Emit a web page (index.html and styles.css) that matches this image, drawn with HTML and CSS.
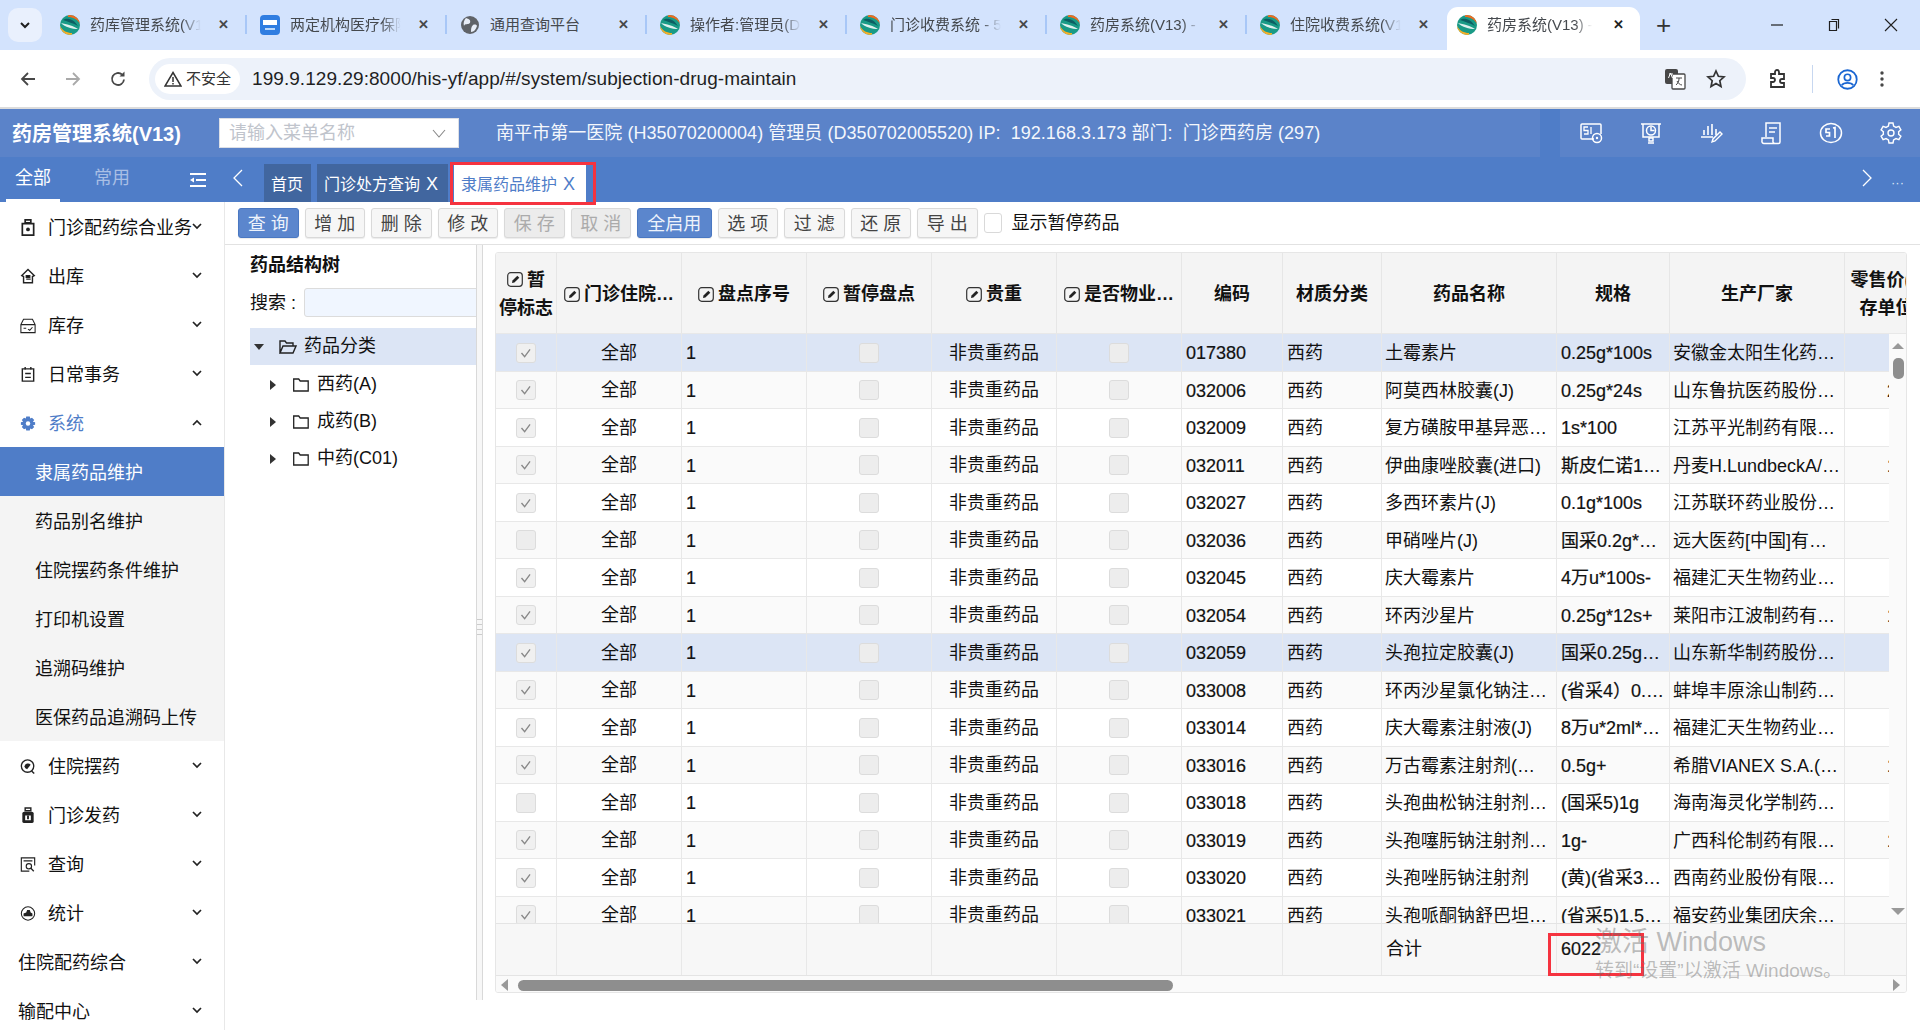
FILE: index.html
```html
<!DOCTYPE html>
<html lang="zh-CN">
<head>
<meta charset="utf-8">
<title>药房系统(V13)</title>
<link rel="stylesheet" href="styles.css">
</head>
<body>
<svg class="defs" aria-hidden="true">
  <defs>
    <clipPath id="fav-clip"><circle cx="10" cy="10" r="10"/></clipPath>
    <symbol id="fav" viewBox="0 0 20 20">
      <g clip-path="url(#fav-clip)">
        <rect width="20" height="20" fill="#1a9a86"/>
        <path d="M8 0h12v9C17 4 13 2 8 2z" fill="#ee6a1f"/>
        <path d="M0 11c3 5 7 7 12 7v2H0z" fill="#f4ae28"/>
        <path d="M3 5c4-3 11-1 15 6-5-3-10-4-15-6z" fill="#0d5f63"/>
        <path d="M1 8c5 1 13 3 17 6-6 0-13-2-17-6z" fill="#fff" opacity=".85"/>
      </g>
    </symbol>
    <symbol id="edit" viewBox="0 0 16 15">
      <rect x=".7" y=".7" width="14.6" height="13.6" rx="3" fill="none" stroke="#333" stroke-width="1.200"/>
      <path d="M5 11l.5-2.400 4.800-4.800 2 1.900-4.900 4.800z" fill="#222"/>
    </symbol>
    <symbol id="chev" viewBox="0 0 10 7">
      <path d="M1 1l4 4 4-4" fill="none" stroke="#222" stroke-width="1.700"/>
    </symbol>
    <symbol id="folder" viewBox="0 0 16 14">
      <path d="M.7 1h5l1.500 2h8v10H.7z" fill="none" stroke="#222" stroke-width="1.300"/>
    </symbol>
  </defs>
</svg>

<header class="browser-tabs">
  <button class="tab-search"><svg class="tab-search-icon" viewBox="0 0 10 7"><path d="M1 1l4 4 4-4" fill="none" stroke="#1f1f1f" stroke-width="2"/></svg></button>
  <div class="b-tab"><svg class="favicon"><use href="#fav"/></svg><span class="b-title">药库管理系统(V1</span><span class="b-close">✕</span></div>
  <div class="b-tab"><svg class="favicon" viewBox="0 0 20 20"><rect width="20" height="20" rx="4" fill="#2f7de1"/><rect x="3" y="5" width="14" height="5" fill="#fff"/><rect x="5" y="13" width="10" height="2" fill="#bcd8fa"/></svg><span class="b-title">两定机构医疗保障</span><span class="b-close">✕</span></div>
  <div class="b-tab"><svg class="favicon" viewBox="0 0 20 20"><circle cx="10" cy="10" r="9" fill="#5f6368"/><path d="M6 3c3 1 5 2 4 5-2 2-5 0-6 3-1-3 0-6 2-8zm7 7c2-1 4 0 4 1-1 3-3 6-6 6 0-3 0-5 2-7z" fill="#e8eef8"/></svg><span class="b-title b-title-full">通用查询平台</span><span class="b-close">✕</span></div>
  <div class="b-tab"><svg class="favicon"><use href="#fav"/></svg><span class="b-title">操作者:管理员(D</span><span class="b-close">✕</span></div>
  <div class="b-tab"><svg class="favicon"><use href="#fav"/></svg><span class="b-title">门诊收费系统 - 5</span><span class="b-close">✕</span></div>
  <div class="b-tab"><svg class="favicon"><use href="#fav"/></svg><span class="b-title">药房系统(V13) -</span><span class="b-close">✕</span></div>
  <div class="b-tab"><svg class="favicon"><use href="#fav"/></svg><span class="b-title">住院收费系统(V1</span><span class="b-close">✕</span></div>
  <div class="b-tab b-tab-active"><svg class="favicon"><use href="#fav"/></svg><span class="b-title">药房系统(V13) -</span><span class="b-close">✕</span></div>
  <span class="b-new">+</span>
  <div class="win-controls">
    <svg class="win-btn" viewBox="0 0 14 14"><path d="M1 7h12" stroke="#1f1f1f" stroke-width="1.200"/></svg>
    <svg class="win-btn" viewBox="0 0 14 14"><path d="M4.500 1.500h7v9M2.500 3.500h7v9h-7z" fill="none" stroke="#1f1f1f" stroke-width="1.200"/></svg>
    <svg class="win-btn" viewBox="0 0 14 14"><path d="M1 1l12 12M13 1L1 13" stroke="#1f1f1f" stroke-width="1.100"/></svg>
  </div>
</header>

<div class="browser-bar">
  <svg class="bar-icon" viewBox="0 0 18 18"><path d="M16 9H3M9 3L3 9l6 6" fill="none" stroke="#474747" stroke-width="1.800"/></svg>
  <svg class="bar-icon bar-icon-off" viewBox="0 0 18 18"><path d="M2 9h13M9 3l6 6-6 6" fill="none" stroke="#a9a9a9" stroke-width="1.800"/></svg>
  <svg class="bar-icon" viewBox="0 0 18 18"><path d="M15 9.500A6 6 0 1 1 13 4.500" fill="none" stroke="#474747" stroke-width="1.800"/><path d="M15.500 1.500v5h-5z" fill="#474747"/></svg>
  <div class="omnibox">
    <span class="chip"><svg class="warn" viewBox="0 0 18 16"><path d="M9 1.500L17 15H1z" fill="none" stroke="#333" stroke-width="1.500"/><path d="M9 6v5M9 12v1.500" stroke="#333" stroke-width="1.500"/></svg>不安全</span>
    <span class="url">199.9.129.29:8000/his-yf/app/#/system/subjection-drug-maintain</span>
    <svg class="omni-icon" viewBox="0 0 22 22"><rect x="1" y="1" width="13" height="15" rx="2" fill="#474747"/><rect x="8" y="6" width="13" height="15" rx="1" fill="#fff" stroke="#474747" stroke-width="1.300"/><path d="M12 10h6M15 10v1c0 3-2 5-3 6M13 13c1 2 3 4 5 4" fill="none" stroke="#474747"/><path d="M5 6h4M4.500 10l2-5 2 5" fill="none" stroke="#fff"/></svg>
    <svg class="omni-icon omni-star" viewBox="0 0 20 20"><path d="M10 2l2.400 5.300 5.600.6-4.200 3.800 1.200 5.800L10 14.600l-5 2.900 1.200-5.800L2 7.900l5.600-.6z" fill="none" stroke="#333" stroke-width="1.700"/></svg>
  </div>
  <svg class="ext-icon" viewBox="0 0 20 20"><path d="M3 5h4V3a2 2 0 0 1 4 0v2h5v5h-2a2 2 0 0 0 0 4h2v4H3v-5h2a2 2 0 0 0 0-4H3z" fill="none" stroke="#333" stroke-width="1.800"/></svg>
  <span class="bar-sep"></span>
  <svg class="profile" viewBox="0 0 20 20"><circle cx="10" cy="10" r="8.800" fill="none" stroke="#1a66d2" stroke-width="1.700"/><circle cx="10" cy="8" r="3" fill="none" stroke="#1a66d2" stroke-width="1.600"/><path d="M4.500 15.500c2-3 9-3 11 0" fill="none" stroke="#1a66d2" stroke-width="1.600"/></svg>
  <svg class="dots" viewBox="0 0 4 18"><circle cx="2" cy="3" r="1.700" fill="#474747"/><circle cx="2" cy="9" r="1.700" fill="#474747"/><circle cx="2" cy="15" r="1.700" fill="#474747"/></svg>
</div>

<div class="app-header">
  <div class="app-header-main">
    <h1 class="app-title">药房管理系统(V13)</h1>
    <div class="menu-search"><span>请输入菜单名称</span><svg class="menu-search-chev" viewBox="0 0 14 9"><path d="M1 1l6 7 6-7" fill="none" stroke="#888" stroke-width="1.100"/></svg></div>
    <div class="app-info">南平市第一医院 (H35070200004) 管理员 (D350702005520) IP:&nbsp; 192.168.3.173 部门:&nbsp; 门诊西药房 (297)</div>
  </div>
  <div class="app-header-tools">
    <svg class="tool" viewBox="0 0 24 24"><path d="M15 18H3a1 1 0 0 1-1-1V4a1 1 0 0 1 1-1h18a1 1 0 0 1 1 1v9" fill="none" stroke="#fff" stroke-width="1.500"/><path d="M9 6H5v3.500h4V13H5M12 6v7" fill="none" stroke="#fff" stroke-width="1.300"/><circle cx="18" cy="17" r="4.500" fill="none" stroke="#fff" stroke-width="1.500"/><circle cx="18" cy="17" r="1.200" fill="#fff"/></svg>
    <svg class="tool" viewBox="0 0 24 24"><path d="M2 3h20M4 3v13h16V3" fill="none" stroke="#fff" stroke-width="1.500"/><circle cx="12" cy="9.500" r="4.500" fill="none" stroke="#fff" stroke-width="1.500"/><path d="M12 6v3.500h3.500M10 17h4v3h-4zM9 22h6" fill="none" stroke="#fff" stroke-width="1.500"/></svg>
    <svg class="tool" viewBox="0 0 24 24"><path d="M5 14V9M9 14V5M13 14V3M17 14V8M2 16h12" fill="none" stroke="#fff" stroke-width="1.600"/><path d="M13 21l1-3 7-7 2 2-7 7z" fill="none" stroke="#fff" stroke-width="1.400"/></svg>
    <svg class="tool" viewBox="0 0 24 24"><path d="M7 16V2h14v19a1.500 1.500 0 0 1-1.500 1.500H5M3 17h11v3a2 2 0 0 0 2 2.500H5a2 2 0 0 1-2-2.500z" fill="none" stroke="#fff" stroke-width="1.500"/><path d="M10 7h8M10 11h6" stroke="#fff" stroke-width="1.600"/></svg>
    <svg class="tool" viewBox="0 0 24 24"><ellipse cx="12" cy="12" rx="10.500" ry="9.500" fill="none" stroke="#fff" stroke-width="1.500"/><path d="M11 8H7v3.500h3.500V15H7M14 7l2-.5V17" fill="none" stroke="#fff" stroke-width="1.700"/></svg>
    <svg class="tool" viewBox="0 0 24 24"><path d="M10 2h4l.6 3 2.400 1.400 2.900-1 2 3.400-2.300 2a6 6 0 0 1 0 2.400l2.300 2-2 3.400-2.900-1L14.600 19l-.6 3h-4l-.6-3L7 17.600l-2.900 1-2-3.400 2.300-2a6 6 0 0 1 0-2.400l-2.300-2 2-3.400 2.900 1L9.400 5z" fill="none" stroke="#fff" stroke-width="1.400"/><circle cx="12" cy="12" r="3" fill="none" stroke="#fff" stroke-width="1.400"/></svg>
  </div>
</div>

<nav class="app-nav">
  <div class="nav-switch">
    <span class="switch-item switch-on">全部</span>
    <span class="switch-item switch-off">常用</span>
    <svg class="fold" viewBox="0 0 16 16"><path d="M0 2h16M6 8h10M0 14h16" stroke="#fff" stroke-width="2.200"/><path d="M4 5.500L0 8l4 2.500z" fill="#fff"/></svg>
  </div>
  <svg class="nav-arrow" viewBox="0 0 10 18"><path d="M9 1L1 9l8 8" fill="none" stroke="#fff" stroke-width="1.300"/></svg>
  <div class="page-tabs">
    <span class="page-tab page-tab-home">首页</span>
    <span class="page-tab">门诊处方查询<span class="tab-x">X</span></span>
    <span class="page-tab page-tab-active">隶属药品维护<span class="tab-x">X</span><i class="red-box"></i></span>
  </div>
  <svg class="nav-arrow nav-arrow-right" viewBox="0 0 10 18"><path d="M1 1l8 8-8 8" fill="none" stroke="#fff" stroke-width="1.300"/></svg>
  <span class="nav-more">···</span>
</nav>

<div class="main">
  <aside class="sidebar">
    <div class="side-item"><svg class="side-icon" viewBox="0 0 16 18"><path d="M5 1h6v3H5zM2 5h12v12H2z" fill="none" stroke="#222" stroke-width="1.800"/><circle cx="8" cy="11" r="2" fill="#222"/></svg><span class="side-text">门诊配药综合业务</span><svg class="chev"><use href="#chev"/></svg></div>
    <div class="side-item"><svg class="side-icon" viewBox="0 0 18 18"><path d="M9 1l7 7-2 1v7H4V9L2 8z" fill="none" stroke="#222" stroke-width="1.600"/><path d="M7 8h4v2H7zM7 12h5" stroke="#222" stroke-width="1.400"/></svg><span class="side-text">出库</span><svg class="chev"><use href="#chev"/></svg></div>
    <div class="side-item"><svg class="side-icon" viewBox="0 0 18 18"><path d="M1 8l3-6h10l3 6v9H1zM1 8h16M4 12h3M9 13l2 1.500 3-3.500" fill="none" stroke="#222" stroke-width="1.200"/></svg><span class="side-text">库存</span><svg class="chev"><use href="#chev"/></svg></div>
    <div class="side-item"><svg class="side-icon" viewBox="0 0 16 18"><path d="M2 3h12v13H2zM5 1v3M11 1v3M5 8h6M5 12h6" fill="none" stroke="#222" stroke-width="1.500"/></svg><span class="side-text">日常事务</span><svg class="chev"><use href="#chev"/></svg></div>
    <div class="side-item side-item-open"><svg class="side-icon" viewBox="0 0 18 18"><path d="M7 1h4l.5 2.500 2-1 2.500 2.500-1.500 2L17 7.500v3l-2.500.5 1.500 2-2.500 2.500-2-1L11 17H7l-.5-2.500-2 1L2 13l1.500-2L1 10.500v-3l2.500-.5L2 5l2.500-2.500 2 1z" fill="#4f7dc8"/><circle cx="9" cy="9" r="2.500" fill="#fff"/></svg><span class="side-text">系统</span><svg class="chev chev-up"><use href="#chev"/></svg></div>
    <div class="side-sub">
      <div class="sub-item sub-item-active">隶属药品维护</div>
      <div class="sub-item">药品别名维护</div>
      <div class="sub-item">住院摆药条件维护</div>
      <div class="sub-item">打印机设置</div>
      <div class="sub-item">追溯码维护</div>
      <div class="sub-item">医保药品追溯码上传</div>
    </div>
    <div class="side-item"><svg class="side-icon" viewBox="0 0 18 18"><circle cx="8.500" cy="8.500" r="7" fill="none" stroke="#222" stroke-width="1.500"/><path d="M5 9a4 4 0 0 1 7-2l-4 5a4 4 0 0 1-3-3z" fill="#222"/><path d="M13 14l3 3" stroke="#222" stroke-width="1.600"/></svg><span class="side-text">住院摆药</span><svg class="chev"><use href="#chev"/></svg></div>
    <div class="side-item"><svg class="side-icon" viewBox="0 0 16 18"><path d="M5 1h6v3H5z" fill="none" stroke="#222" stroke-width="1.500"/><rect x="2" y="5" width="12" height="12" rx="2" fill="#222"/><path d="M5 9h6v5H5z" fill="#fff"/><path d="M8 9v4" stroke="#222" stroke-width="2"/></svg><span class="side-text">门诊发药</span><svg class="chev"><use href="#chev"/></svg></div>
    <div class="side-item"><svg class="side-icon" viewBox="0 0 18 18"><path d="M16.500 10V1.500h-15v15h9M4 5h10" fill="none" stroke="#222" stroke-width="1.300"/><circle cx="10" cy="11" r="3" fill="none" stroke="#222" stroke-width="1.300"/><path d="M12 13l3.500 3.500" stroke="#222" stroke-width="1.500"/></svg><span class="side-text">查询</span><svg class="chev"><use href="#chev"/></svg></div>
    <div class="side-item"><svg class="side-icon" viewBox="0 0 18 18"><circle cx="9" cy="9" r="7.500" fill="none" stroke="#222" stroke-width="1.200"/><path d="M4 12h10V9l-2-1-1-3H8L7 8 4 9z" fill="#222"/></svg><span class="side-text">统计</span><svg class="chev"><use href="#chev"/></svg></div>
    <div class="side-item"><span class="side-text">住院配药综合</span><svg class="chev"><use href="#chev"/></svg></div>
    <div class="side-item"><span class="side-text">输配中心</span><svg class="chev"><use href="#chev"/></svg></div>
  </aside>

  <section class="content">
    <div class="toolbar">
      <button class="btn btn-primary">查询</button>
      <button class="btn">增加</button>
      <button class="btn">删除</button>
      <button class="btn">修改</button>
      <button class="btn btn-off">保存</button>
      <button class="btn btn-off">取消</button>
      <button class="btn btn-primary btn-wide">全启用</button>
      <button class="btn">选项</button>
      <button class="btn">过滤</button>
      <button class="btn">还原</button>
      <button class="btn">导出</button>
      <span class="tool-check"></span>
      <span class="tool-label">显示暂停药品</span>
    </div>
    <div class="panes">
      <div class="tree-pane">
        <div class="tree-title">药品结构树</div>
        <div class="tree-search"><span class="tree-label">搜索 :</span><span class="tree-input"></span></div>
        <div class="tree-row tree-root"><i class="caret-down"></i><svg class="folder-open" viewBox="0 0 18 14"><path d="M1 13V1h5l1.500 2H14v3M1 13l3-7h13l-3 7z" fill="none" stroke="#222" stroke-width="1.400"/></svg><span>药品分类</span></div>
        <div class="tree-row tree-child"><i class="caret-right"></i><svg class="folder"><use href="#folder"/></svg><span>西药(A)</span></div>
        <div class="tree-row tree-child"><i class="caret-right"></i><svg class="folder"><use href="#folder"/></svg><span>成药(B)</span></div>
        <div class="tree-row tree-child"><i class="caret-right"></i><svg class="folder"><use href="#folder"/></svg><span>中药(C01)</span></div>
      </div>
      <div class="splitter"><i class="grip"></i></div>
      <div class="table-pane">
        <div class="grid-row grid-head">
          <div class="th th-wrap"><svg class="edit"><use href="#edit"/></svg>暂<br>停标志</div>
          <div class="th"><svg class="edit"><use href="#edit"/></svg>门诊住院…</div>
          <div class="th"><svg class="edit"><use href="#edit"/></svg>盘点序号</div>
          <div class="th"><svg class="edit"><use href="#edit"/></svg>暂停盘点</div>
          <div class="th"><svg class="edit"><use href="#edit"/></svg>贵重</div>
          <div class="th"><svg class="edit"><use href="#edit"/></svg>是否物业…</div>
          <div class="th">编码</div>
          <div class="th">材质分类</div>
          <div class="th">药品名称</div>
          <div class="th">规格</div>
          <div class="th">生产厂家</div>
          <div class="th th-wrap th-price">零售价(库<br>存单位)</div>
        </div>
        <div class="grid-scroll">
          <div class="grid-clip">
            <div class="grid-row row-on"><div class="td tc"><i class="cb cb-on"></i></div><div class="td tc">全部</div><div class="td">1</div><div class="td tc"><i class="cb"></i></div><div class="td tc">非贵重药品</div><div class="td tc"><i class="cb"></i></div><div class="td">017380</div><div class="td">西药</div><div class="td">土霉素片</div><div class="td">0.25g*100s</div><div class="td">安徽金太阳生化药…</div><div class="td td-price"></div></div>
            <div class="grid-row row-alt"><div class="td tc"><i class="cb cb-on"></i></div><div class="td tc">全部</div><div class="td">1</div><div class="td tc"><i class="cb"></i></div><div class="td tc">非贵重药品</div><div class="td tc"><i class="cb"></i></div><div class="td">032006</div><div class="td">西药</div><div class="td">阿莫西林胶囊(J)</div><div class="td">0.25g*24s</div><div class="td">山东鲁抗医药股份…</div><div class="td td-price">2</div></div>
            <div class="grid-row"><div class="td tc"><i class="cb cb-on"></i></div><div class="td tc">全部</div><div class="td">1</div><div class="td tc"><i class="cb"></i></div><div class="td tc">非贵重药品</div><div class="td tc"><i class="cb"></i></div><div class="td">032009</div><div class="td">西药</div><div class="td">复方磺胺甲基异恶…</div><div class="td">1s*100</div><div class="td">江苏平光制药有限…</div><div class="td td-price"></div></div>
            <div class="grid-row row-alt"><div class="td tc"><i class="cb cb-on"></i></div><div class="td tc">全部</div><div class="td">1</div><div class="td tc"><i class="cb"></i></div><div class="td tc">非贵重药品</div><div class="td tc"><i class="cb"></i></div><div class="td">032011</div><div class="td">西药</div><div class="td">伊曲康唑胶囊(进口)</div><div class="td">斯皮仁诺1…</div><div class="td">丹麦H.LundbeckA/…</div><div class="td td-price">1</div></div>
            <div class="grid-row"><div class="td tc"><i class="cb cb-on"></i></div><div class="td tc">全部</div><div class="td">1</div><div class="td tc"><i class="cb"></i></div><div class="td tc">非贵重药品</div><div class="td tc"><i class="cb"></i></div><div class="td">032027</div><div class="td">西药</div><div class="td">多西环素片(J)</div><div class="td">0.1g*100s</div><div class="td">江苏联环药业股份…</div><div class="td td-price"></div></div>
            <div class="grid-row row-alt"><div class="td tc"><i class="cb"></i></div><div class="td tc">全部</div><div class="td">1</div><div class="td tc"><i class="cb"></i></div><div class="td tc">非贵重药品</div><div class="td tc"><i class="cb"></i></div><div class="td">032036</div><div class="td">西药</div><div class="td">甲硝唑片(J)</div><div class="td">国采0.2g*…</div><div class="td">远大医药[中国]有…</div><div class="td td-price"></div></div>
            <div class="grid-row"><div class="td tc"><i class="cb cb-on"></i></div><div class="td tc">全部</div><div class="td">1</div><div class="td tc"><i class="cb"></i></div><div class="td tc">非贵重药品</div><div class="td tc"><i class="cb"></i></div><div class="td">032045</div><div class="td">西药</div><div class="td">庆大霉素片</div><div class="td">4万u*100s-</div><div class="td">福建汇天生物药业…</div><div class="td td-price"></div></div>
            <div class="grid-row row-alt"><div class="td tc"><i class="cb cb-on"></i></div><div class="td tc">全部</div><div class="td">1</div><div class="td tc"><i class="cb"></i></div><div class="td tc">非贵重药品</div><div class="td tc"><i class="cb"></i></div><div class="td">032054</div><div class="td">西药</div><div class="td">环丙沙星片</div><div class="td">0.25g*12s+</div><div class="td">莱阳市江波制药有…</div><div class="td td-price">1</div></div>
            <div class="grid-row row-on"><div class="td tc"><i class="cb cb-on"></i></div><div class="td tc">全部</div><div class="td">1</div><div class="td tc"><i class="cb"></i></div><div class="td tc">非贵重药品</div><div class="td tc"><i class="cb"></i></div><div class="td">032059</div><div class="td">西药</div><div class="td">头孢拉定胶囊(J)</div><div class="td">国采0.25g…</div><div class="td">山东新华制药股份…</div><div class="td td-price"></div></div>
            <div class="grid-row row-alt"><div class="td tc"><i class="cb cb-on"></i></div><div class="td tc">全部</div><div class="td">1</div><div class="td tc"><i class="cb"></i></div><div class="td tc">非贵重药品</div><div class="td tc"><i class="cb"></i></div><div class="td">033008</div><div class="td">西药</div><div class="td">环丙沙星氯化钠注…</div><div class="td">(省采4）0.…</div><div class="td">蚌埠丰原涂山制药…</div><div class="td td-price"></div></div>
            <div class="grid-row"><div class="td tc"><i class="cb cb-on"></i></div><div class="td tc">全部</div><div class="td">1</div><div class="td tc"><i class="cb"></i></div><div class="td tc">非贵重药品</div><div class="td tc"><i class="cb"></i></div><div class="td">033014</div><div class="td">西药</div><div class="td">庆大霉素注射液(J)</div><div class="td">8万u*2ml*…</div><div class="td">福建汇天生物药业…</div><div class="td td-price"></div></div>
            <div class="grid-row row-alt"><div class="td tc"><i class="cb cb-on"></i></div><div class="td tc">全部</div><div class="td">1</div><div class="td tc"><i class="cb"></i></div><div class="td tc">非贵重药品</div><div class="td tc"><i class="cb"></i></div><div class="td">033016</div><div class="td">西药</div><div class="td">万古霉素注射剂(…</div><div class="td">0.5g+</div><div class="td">希腊VIANEX S.A.(…</div><div class="td td-price">1</div></div>
            <div class="grid-row"><div class="td tc"><i class="cb"></i></div><div class="td tc">全部</div><div class="td">1</div><div class="td tc"><i class="cb"></i></div><div class="td tc">非贵重药品</div><div class="td tc"><i class="cb"></i></div><div class="td">033018</div><div class="td">西药</div><div class="td">头孢曲松钠注射剂…</div><div class="td">(国采5)1g</div><div class="td">海南海灵化学制药…</div><div class="td td-price"></div></div>
            <div class="grid-row row-alt"><div class="td tc"><i class="cb cb-on"></i></div><div class="td tc">全部</div><div class="td">1</div><div class="td tc"><i class="cb"></i></div><div class="td tc">非贵重药品</div><div class="td tc"><i class="cb"></i></div><div class="td">033019</div><div class="td">西药</div><div class="td">头孢噻肟钠注射剂…</div><div class="td">1g-</div><div class="td">广西科伦制药有限…</div><div class="td td-price">1</div></div>
            <div class="grid-row"><div class="td tc"><i class="cb cb-on"></i></div><div class="td tc">全部</div><div class="td">1</div><div class="td tc"><i class="cb"></i></div><div class="td tc">非贵重药品</div><div class="td tc"><i class="cb"></i></div><div class="td">033020</div><div class="td">西药</div><div class="td">头孢唑肟钠注射剂</div><div class="td">(黄)(省采3…</div><div class="td">西南药业股份有限…</div><div class="td td-price"></div></div>
            <div class="grid-row row-alt"><div class="td tc"><i class="cb cb-on"></i></div><div class="td tc">全部</div><div class="td">1</div><div class="td tc"><i class="cb"></i></div><div class="td tc">非贵重药品</div><div class="td tc"><i class="cb"></i></div><div class="td">033021</div><div class="td">西药</div><div class="td">头孢哌酮钠舒巴坦…</div><div class="td">(省采5)1.5…</div><div class="td">福安药业集团庆余…</div><div class="td td-price"></div></div>
          </div>
          <div class="v-scroll"><i class="tri-up"></i><i class="v-thumb"></i><i class="tri-down"></i></div>
        </div>
        <div class="grid-row grid-foot">
          <div class="tf"></div><div class="tf"></div><div class="tf"></div><div class="tf"></div><div class="tf"></div><div class="tf"></div><div class="tf"></div><div class="tf"></div>
          <div class="tf">合计</div>
          <div class="tf tf-mark">6022<i class="red-mark"></i></div>
          <div class="tf"></div><div class="tf"></div>
        </div>
        <div class="h-scroll"><i class="tri-left"></i><i class="h-thumb"></i><i class="tri-right"></i></div>
      </div>
    </div>
  </section>
</div>

<div class="watermark">
  <div class="wm-big">激活 Windows</div>
  <div class="wm-small">转到“设置”以激活 Windows。</div>
</div>
</body>
</html>
```

FILE: styles.css
```css
* { box-sizing: border-box; }
html, body { margin: 0; padding: 0; }
body {
  width: 1920px;
  height: 1030px;
  overflow: hidden;
  position: relative;
  display: flex;
  flex-direction: column;
  background: #fff;
  color: #111;
  font: 18px/1.2 "Liberation Sans", "Noto Sans CJK SC", sans-serif;
}
.defs { width: 0; height: 0; position: absolute; }
i { display: block; font-style: normal; }

/* browser tab strip */
.browser-tabs {
  flex: none;
  height: 50px;
  display: flex;
  align-items: flex-end;
  background: #d3e3fd;
  position: relative;
}
.tab-search {
  width: 34px;
  height: 34px;
  margin: 0 4px 8px 8px;
  border: 0;
  border-radius: 10px;
  background: #e9f0fd;
  display: flex;
  align-items: center;
  justify-content: center;
  padding: 0;
}
.tab-search-icon { width: 10px; height: 7px; }
.b-tab {
  width: 200px;
  height: 43px;
  padding: 0 12px 8px 14px;
  display: flex;
  align-items: center;
  position: relative;
  font-size: 15px;
  color: #45494e;
}
.b-tab::after {
  content: "";
  position: absolute;
  right: -1px;
  top: 8px;
  width: 2px;
  height: 19px;
  background: #a8c7f7;
}
.b-tab:nth-child(8)::after, .b-tab-active::after { display: none; }
.favicon { width: 20px; height: 20px; flex: none; margin-right: 10px; }
.b-title {
  width: 118px;
  flex: none;
  white-space: nowrap;
  -webkit-mask-image: linear-gradient(to right, #000 78%, transparent 94%);
  mask-image: linear-gradient(to right, #000 78%, transparent 94%);
}
.b-title-full { -webkit-mask-image: none; mask-image: none; }
.b-close {
  margin-left: 8px;
  font-size: 13px;
  font-weight: bold;
  color: #474747;
  width: 14px;
  text-align: center;
}
.b-tab-active {
  width: 193px;
  margin-left: 1px;
  padding-left: 10px;
  background: #fff;
  border-radius: 11px 11px 0 0;
  color: #45494e;
}
.b-tab-active .b-title { width: 112px; }
.b-tab-active .b-close { margin-left: 12px; color: #1f1f1f; }
.b-new { margin-left: 16px; padding-bottom: 8px; height: 42px; line-height: 34px; font-size: 26px; color: #333; font-weight: 300; }
.win-controls { margin-left: auto; height: 50px; display: flex; align-items: center; gap: 43px; padding: 0 22px 0 0; }
.win-btn { width: 14px; height: 14px; }

/* browser toolbar */
.browser-bar {
  flex: none;
  height: 59px;
  padding: 8px 0 7px;
  display: flex;
  align-items: center;
  background: #fff;
  border-bottom: 2px solid #dcdcdc;
}
.bar-icon { width: 18px; height: 18px; margin-left: 19px; margin-right: 8px; flex: none; }
.omnibox {
  width: 1597px;
  height: 42px;
  margin-left: 14px;
  border-radius: 21px;
  background: #edf2fa;
  display: flex;
  align-items: center;
  padding: 0 16px 0 6px;
}
.chip {
  width: 85px;
  height: 30px;
  border-radius: 15px;
  background: #fff;
  display: flex;
  align-items: center;
  justify-content: center;
  gap: 4px;
  font-size: 15px;
  color: #333;
}
.warn { width: 18px; height: 16px; }
.url { margin-left: 12px; color: #1f1f1f; font-size: 19px; letter-spacing: .06px; white-space: nowrap; }
.omni-icon { width: 22px; height: 22px; margin-left: auto; }
.omni-star { width: 20px; height: 20px; margin-left: 20px; margin-right: 4px; }
.ext-icon { width: 20px; height: 20px; margin-left: 22px; }
.bar-sep { width: 1px; height: 28px; background: #c7d7f0; margin-left: 24px; }
.profile { width: 21px; height: 21px; margin-left: 24px; }
.dots { width: 4px; height: 18px; margin-left: 22px; }

/* application header */
.app-header {
  flex: none;
  height: 48px;
  display: flex;
  background: #4f7dc8;
  color: #fff;
}
.app-header-main {
  width: 1540px;
  display: flex;
  align-items: center;
  padding-left: 12px;
  background: #5b83c9;
}
.app-title { margin: 0; width: 207px; padding-top: 2px; font-size: 20px; font-weight: bold; flex: none; }
.menu-search {
  width: 240px;
  height: 30px;
  background: #fff;
  border: 1px solid #dcdfe6;
  display: flex;
  align-items: center;
  justify-content: space-between;
  padding: 2px 12px 0 9px;
  color: #c0c4cc;
  flex: none;
}
.menu-search-chev { width: 14px; height: 9px; margin-top: -2px; }
.app-info { margin-left: 37px; padding-top: 2px; white-space: nowrap; color: #f4f7fc; letter-spacing: .05px; }
.app-header-tools {
  margin-left: 20px;
  width: 360px;
  display: flex;
  align-items: center;
  gap: 36px;
  padding-left: 19px;
  background: #5b83c9;
}
.tool { width: 24px; height: 24px; flex: none; }

/* app nav */
.app-nav {
  flex: none;
  height: 45px;
  display: flex;
  align-items: flex-end;
  background: #4f7dc8;
  color: #fff;
}
.nav-switch { width: 224px; height: 45px; display: flex; align-items: center; position: relative; flex: none; }
.switch-item { position: relative; height: 45px; line-height: 42px; }
.switch-on { margin-left: 6px; width: 54px; text-align: center; border-bottom: 3px solid #fff; }
.switch-off { margin-left: 34px; color: #a9bfe5; }
.fold { width: 16px; height: 16px; margin-left: 60px; }
.nav-arrow { width: 10px; height: 18px; margin: 0 21px 15px 9px; flex: none; }
.page-tabs { display: flex; gap: 6px; }
.page-tab {
  height: 38px;
  line-height: 41px;
  padding: 0 7px;
  font-size: 16px;
  background: #41669f;
  white-space: nowrap;
  position: relative;
  width: 131px;
}
.tab-x { font-size: 18px; margin-left: 6px; }
.page-tab-home { width: 47px; }
.page-tab-active { width: 132px; background: #fff; color: #4f7dc8; }
.red-box {
  position: absolute;
  left: -4px;
  right: -10px;
  top: -2px;
  bottom: -3px;
  border: 3px solid #f5333f;
}
.nav-arrow-right { margin: 0 0 15px auto; }
.nav-more { margin: 0 16px 11px 19px; font-size: 13px; color: #dbe5f5; }

/* main */
.main { flex: 1; min-height: 0; display: flex; }
.sidebar {
  flex: none;
  width: 225px;
  border-right: 1px solid #e8e8e8;
  background: #fff;
}
.side-item {
  height: 49px;
  display: flex;
  align-items: center;
  padding: 0 22px 0 18px;
}
.side-text { white-space: nowrap; padding-top: 4px; }
.side-icon { width: 16px; height: 17px; margin: 2px 12px 0 2px; flex: none; }
.chev { width: 10px; height: 7px; margin-left: auto; flex: none; }
.chev-up { transform: rotate(180deg); }
.side-item-open { color: #4f7dc8; }
.side-sub { background: #f4f4f4; }
.sub-item { height: 49px; line-height: 53px; padding-left: 35px; white-space: nowrap; }
.sub-item-active { background: #4f7dc8; color: #fff; }

.content { flex: 1; min-width: 0; display: flex; flex-direction: column; }
.toolbar {
  flex: none;
  height: 43px;
  padding: 6px 0 0 13px;
  display: flex;
  align-items: flex-start;
  gap: 6px;
  border-bottom: 1px solid #e2e2e2;
}
.btn {
  width: 60.5px;
  height: 30px;
  padding: 3px 0 0;
  border: 1px solid #d9d9d9;
  border-radius: 3px;
  background: #f6f6f6;
  color: #444;
  font: inherit;
  letter-spacing: 5px;
  text-indent: 5px;
  box-shadow: 0 1px 1px rgba(0,0,0,.08);
}
.btn-primary { background: #5b86cd; border-color: #4a78c2; color: #eef3fb; }
.btn-off { background: #ececec; color: #ababab; }
.btn-wide { width: 74.5px; letter-spacing: 0; text-indent: 0; }
.tool-check {
  width: 18px;
  height: 20px;
  margin: 5px 0 0 0;
  border: 1px solid #d9d9d9;
  border-radius: 3px;
  background: #fff;
}
.tool-label { margin: 5px 0 0 4px; white-space: nowrap; }

.panes { flex: none; height: 755px; display: flex; }
.tree-pane { width: 251px; flex: none; padding-left: 25px; overflow: hidden; }
.tree-title { font-weight: bold; height: 38px; line-height: 40px; white-space: nowrap; }
.tree-search { height: 29px; margin-top: 5px; display: flex; align-items: center; }
.tree-label { width: 54px; flex: none; white-space: nowrap; padding-top: 2px; }
.tree-input {
  width: 176px;
  height: 29px;
  background: #f0f6ff;
  border: 1px solid #dcdcdc;
  border-radius: 3px;
  flex: none;
}
.tree-row { height: 37px; display: flex; align-items: center; white-space: nowrap; }
.tree-root { margin-top: 11px; background: #dce5f5; padding-left: 4px; }
.tree-child { padding-left: 20px; padding-top: 2px; }
.caret-down { width: 0; height: 0; border: 5px solid transparent; border-top: 6px solid #333; border-bottom: 0; margin-right: 15px; }
.caret-right { width: 0; height: 0; border: 5px solid transparent; border-left: 6px solid #333; border-right: 0; margin-right: 17px; }
.folder-open { width: 18px; height: 14px; margin-right: 7px; }
.folder { width: 16px; height: 14px; margin-right: 8px; }

.splitter {
  width: 7px;
  flex: none;
  background: #f7f7f7;
  border-left: 1px solid #d9d9d9;
  border-right: 1px solid #d9d9d9;
  display: flex;
  align-items: center;
}
.grip {
  width: 100%;
  height: 16px;
  margin-top: 8px;
  background: repeating-linear-gradient(to bottom, #ccc 0 1px, transparent 1px 5px);
}

.table-pane {
  width: 1412px;
  height: 741px;
  margin: 7px 0 0 12px;
  border: 1px solid #e6e6e6;
  border-radius: 3px;
  overflow: hidden;
  flex: none;
}
.grid-row {
  display: grid;
  grid-template-columns: 61px 125px 125px 125px 125px 125px 101px 99px 175px 113px 175px 90px;
  width: 1459px;
  height: 37.5px;
  border-bottom: 1px solid #e8e8e8;
  background: #fff;
}
.row-alt { background: #fafafa; }
.row-on { background: #dce5f5; }
.grid-head { height: 81px; background: #f4f4f4; }
.th {
  display: flex;
  align-items: center;
  justify-content: center;
  padding-top: 3px;
  border-right: 1px solid #e6e6e6;
  font-weight: bold;
  white-space: nowrap;
  overflow: hidden;
}
.th-wrap { display: block; padding-top: 13px; line-height: 28px; text-align: center; }
.edit { width: 16px; height: 15px; margin-right: 4px; flex: none; vertical-align: -1px; }

.grid-scroll { height: 589px; display: flex; }
.grid-clip { width: 1393px; flex: none; overflow: hidden; }
.td {
  border-right: 1px solid #e8e8e8;
  line-height: 38px;
  padding-left: 4px;
  white-space: nowrap;
  overflow: hidden;
}
.td:nth-child(3), .td:nth-child(7), .td:nth-child(10), .tf-mark, .td-price { -webkit-text-stroke: .2px #111; }
.td:nth-child(9), .td:nth-child(11) { padding-left: 3px; }
.tc { padding: 1px 0 0; text-align: center; display: flex; align-items: center; justify-content: center; }
.td-price { padding-left: 42px; }
.cb {
  width: 20px;
  height: 20px;
  border: 1px solid #dcdcdc;
  border-radius: 3px;
  background: #ededed;
}
.cb-on {
  background: #f0f0f0 url("data:image/svg+xml,%3Csvg xmlns='http://www.w3.org/2000/svg' viewBox='0 0 20 20'%3E%3Cpath d='M5 10l3.500 4 6-8' fill='none' stroke='%23888' stroke-width='1.500'/%3E%3C/svg%3E") center/contain no-repeat;
}

.v-scroll {
  width: 18px;
  flex: none;
  background: #fafafa;
  display: flex;
  flex-direction: column;
  align-items: center;
  padding: 9px 0 8px;
}
.tri-up { width: 0; height: 0; border: 6px solid transparent; border-bottom: 6px solid #999; border-top: 0; }
.tri-down { width: 0; height: 0; margin-top: auto; border: 7px solid transparent; border-top: 7px solid #999; border-bottom: 0; }
.v-thumb { width: 11px; height: 21px; margin-top: 9px; border-radius: 5px; background: #8e8e8e; }

.grid-foot { height: 53px; background: #f7f7f7; border-top: 1px solid #e4e4e4; border-bottom: 1px solid #e4e4e4; }
.tf { border-right: 1px solid #e8e8e8; line-height: 51px; padding-left: 4px; position: relative; }
.red-mark {
  position: absolute;
  left: -9px;
  top: 9px;
  width: 96px;
  height: 43px;
  border: 3px solid #f5333f;
}
.h-scroll { height: 18px; display: flex; align-items: center; background: #fafafa; padding: 0 6px 0 5px; }
.tri-left { width: 0; height: 0; border: 6px solid transparent; border-right: 7px solid #999; border-left: 0; }
.h-thumb { width: 655px; height: 11px; margin-left: 10px; border-radius: 6px; background: #8e8e8e; }
.tri-right { margin-left: auto; width: 0; height: 0; border: 6px solid transparent; border-left: 7px solid #999; border-right: 0; }

/* system overlay */
.watermark {
  position: absolute;
  left: 1595px;
  top: 925px;
  color: rgba(110, 110, 110, .45);
  pointer-events: none;
  white-space: nowrap;
}
.wm-big { font-size: 27px; line-height: 34px; }
.wm-small { font-size: 19px; line-height: 24px; }
```
